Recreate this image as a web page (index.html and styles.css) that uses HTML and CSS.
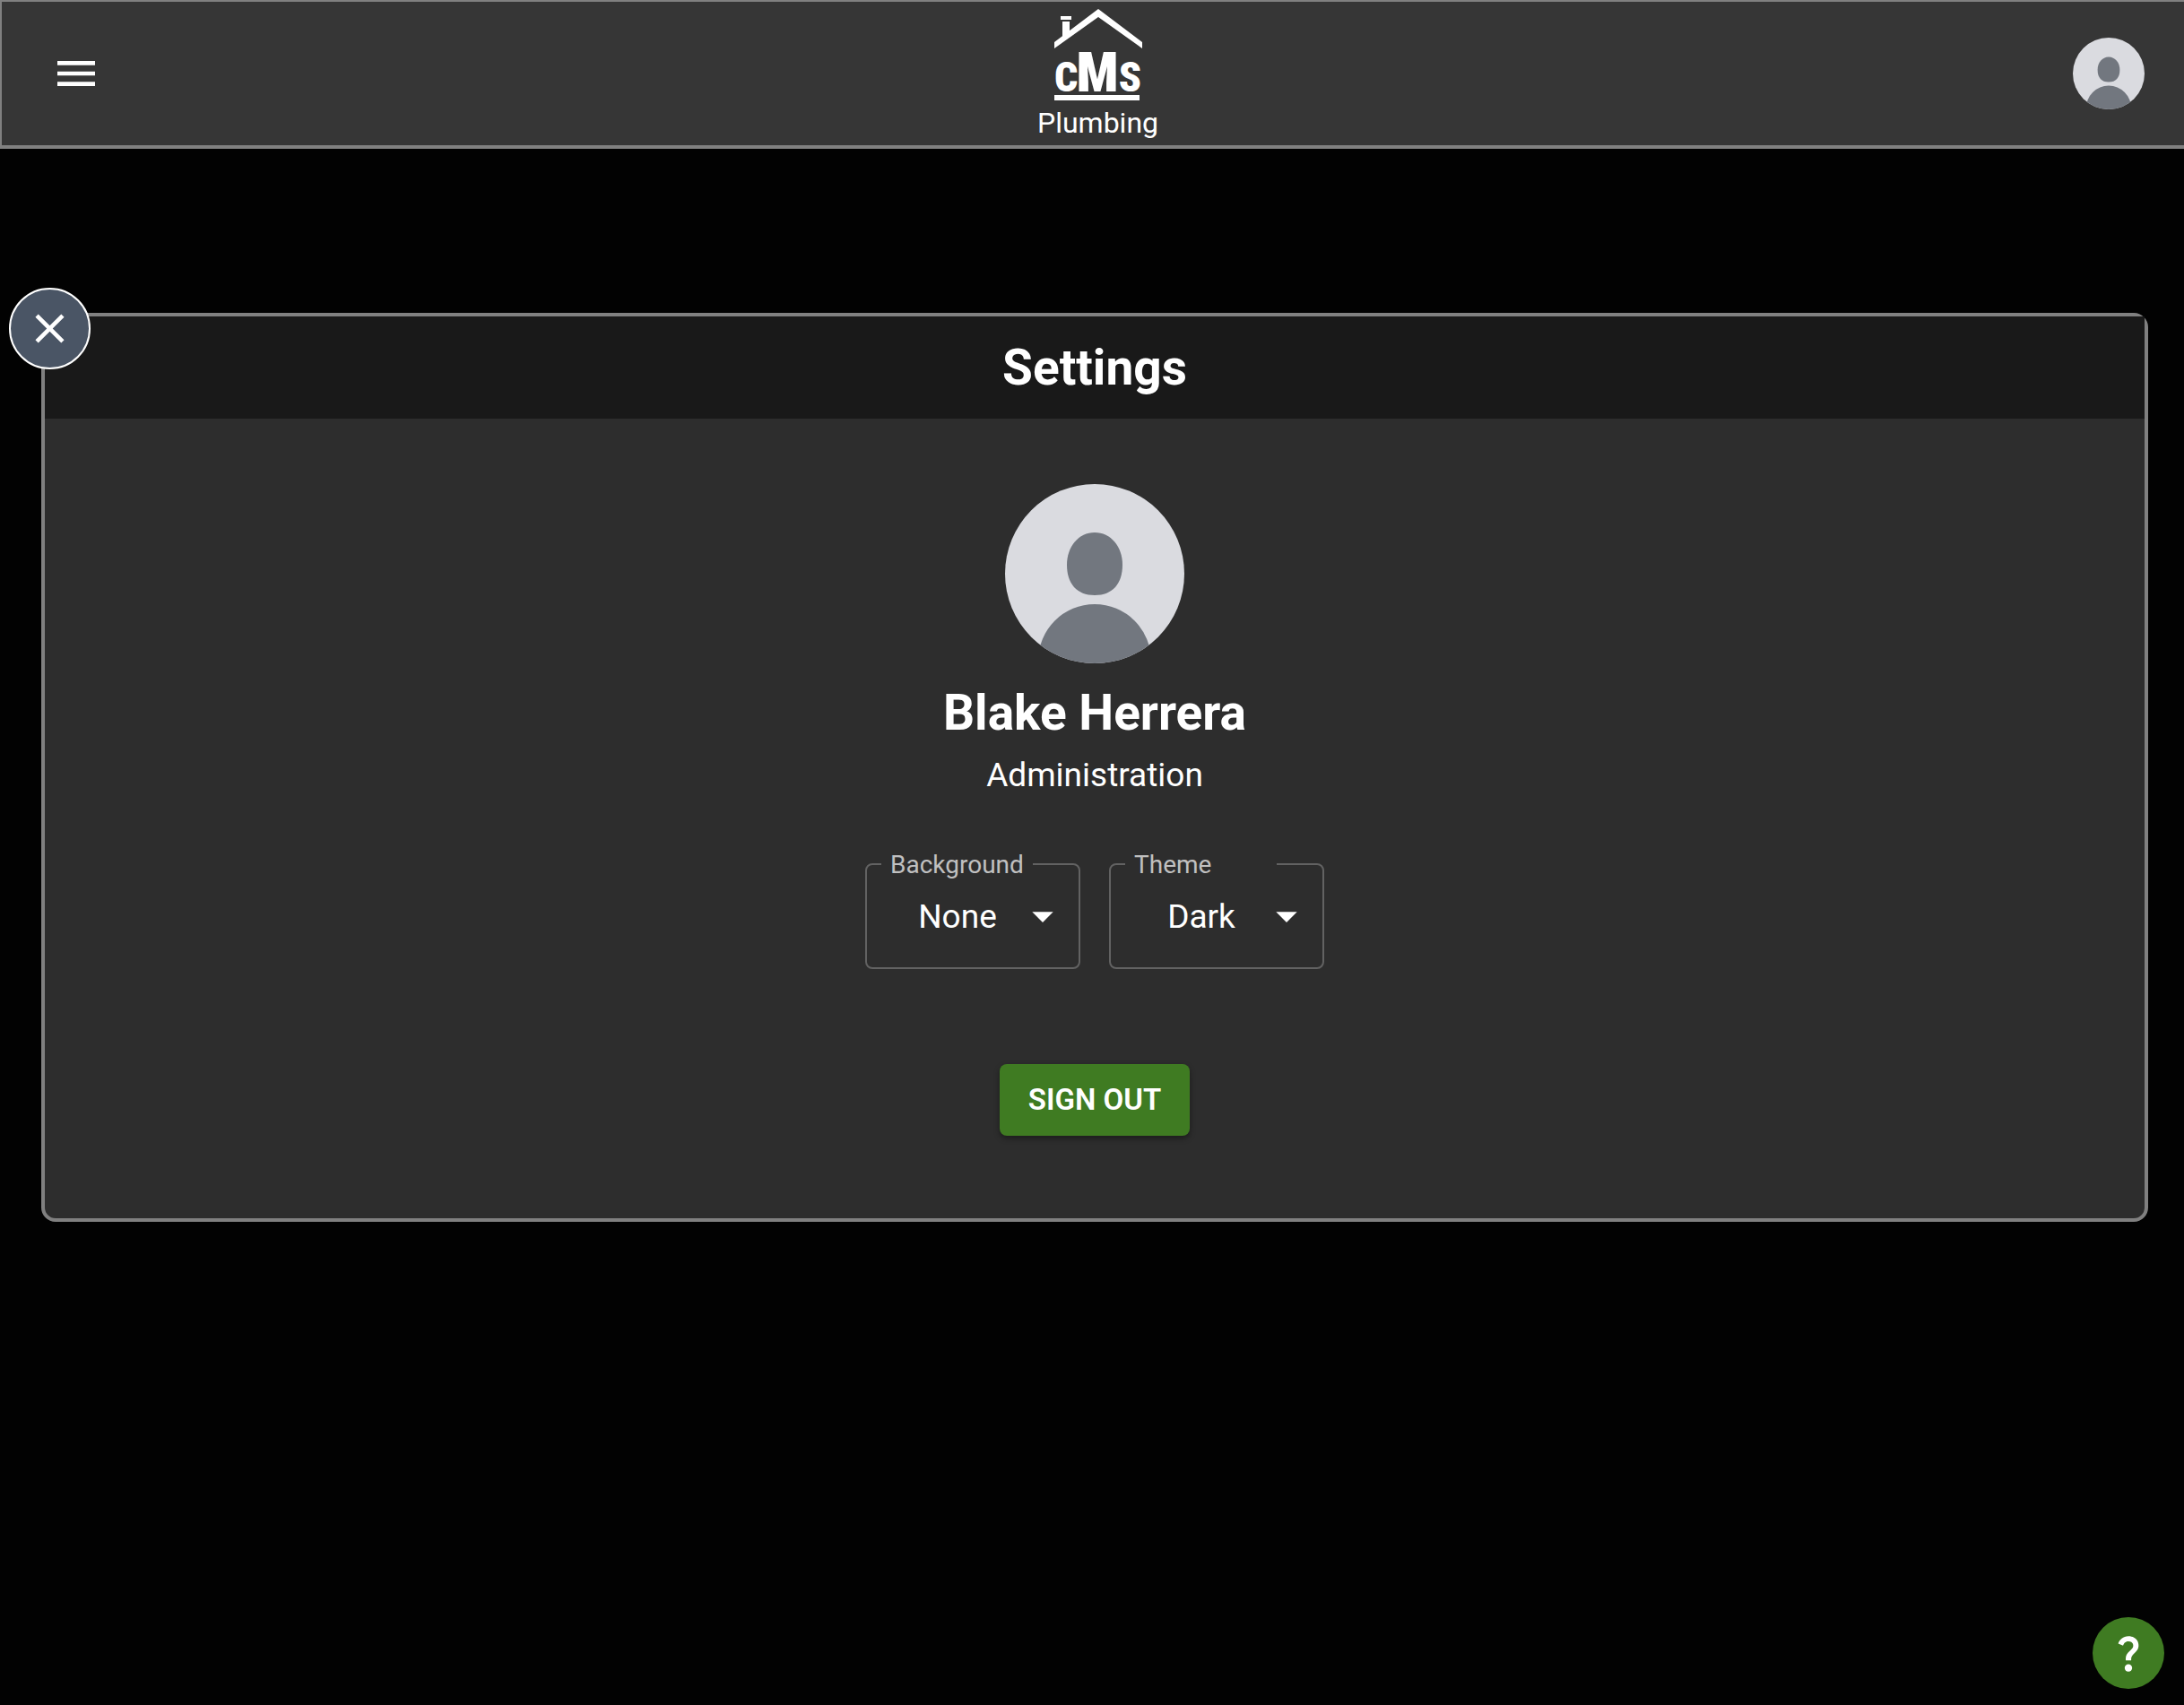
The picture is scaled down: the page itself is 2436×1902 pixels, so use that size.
FILE: index.html
```html
<!DOCTYPE html>
<html lang="en">
<head>
    <meta charset="UTF-8">
    <meta name="viewport" content="width=device-width, initial-scale=1">
    <title>CMS Plumbing - Settings</title>
    <link rel="stylesheet" href="styles.css">
</head>
<body>
    <!-- avatar artwork, shared by the top bar and the profile -->
    <svg class="sprite" aria-hidden="true">
        <symbol id="avatar" viewBox="0 0 200 200">
            <clipPath id="avatar-clip"><circle cx="100" cy="100" r="100"/></clipPath>
            <g clip-path="url(#avatar-clip)">
                <rect width="200" height="200" fill="#dadbe0"/>
                <path d="M100 54c18 0 31 16 31 36 0 21-11 34-31 34s-31-13-31-34c0-20 13-36 31-36z" fill="#72777f"/>
                <circle cx="100" cy="197" r="63" fill="#72777f"/>
            </g>
        </symbol>
    </svg>

    <header class="top-bar">
        <button class="icon-button" aria-label="Menu">
            <svg class="menu-icon" viewBox="0 0 24 24"><path d="M3 18h18v-2H3v2zm0-5h18v-2H3v2zm0-7v2h18V6H3z"/></svg>
        </button>
        <a class="brand" href="#">
            <svg class="logo" viewBox="0 0 98 102">
                <path d="M0 37 49 0l49 37v7L49 9 0 44z"/>
                <path d="M9 14h8v12l-8 6zM7 8h12v4H7z"/>
                <text class="logo-side" x="0" y="92">C</text>
                <text class="logo-main" x="48" y="92">M</text>
                <text class="logo-side logo-end" x="97" y="92">S</text>
                <path d="M0 96h95v6H0z"/>
            </svg>
            <span class="brand-name">Plumbing</span>
        </a>
        <button class="icon-button account" aria-label="Account">
            <svg class="avatar-small"><use href="#avatar"/></svg>
        </button>
    </header>

    <main>
        <section class="card">
            <button class="close-button" aria-label="Close">
                <svg viewBox="0 0 24 24"><path d="M19 6.41 17.59 5 12 10.59 6.41 5 5 6.41 10.59 12 5 17.59 6.41 19 12 13.41 17.59 19 19 17.59 13.41 12z"/></svg>
            </button>
            <h1 class="card-title">Settings</h1>
            <div class="card-body">
                <svg class="avatar-large"><use href="#avatar"/></svg>
                <h2 class="name">Blake Herrera</h2>
                <p class="role">Administration</p>
                <div class="fields">
                    <div class="field">
                        <label for="background">Background</label>
                        <select id="background">
                            <option>None</option>
                        </select>
                        <svg class="arrow" viewBox="0 0 24 24"><path d="m7 10 5 5 5-5z"/></svg>
                    </div>
                    <div class="field">
                        <label for="theme">Theme</label>
                        <select id="theme">
                            <option>Dark</option>
                            <option>Light</option>
                        </select>
                        <svg class="arrow" viewBox="0 0 24 24"><path d="m7 10 5 5 5-5z"/></svg>
                    </div>
                </div>
                <button class="sign-out">SIGN OUT</button>
            </div>
        </section>
    </main>

    <button class="help-button" aria-label="Help">
        <svg viewBox="0 0 24 24"><path d="M11.07 12.85c.77-1.39 2.25-2.21 3.11-3.44.91-1.29.4-3.7-2.18-3.7-1.69 0-2.52 1.28-2.87 2.34L6.54 6.96C7.25 4.83 9.18 3 11.99 3c2.35 0 3.96 1.07 4.78 2.41.7 1.15 1.11 3.3.03 4.9-1.2 1.77-2.35 2.31-2.97 3.45-.25.46-.35.76-.35 2.24h-2.89c-.01-.78-.13-2.05.48-3.15zM14 20c0 1.1-.9 2-2 2s-2-.9-2-2 .9-2 2-2 2 .9 2 2z"/></svg>
    </button>
</body>
</html>
```
FILE: styles.css
```css
* {
    box-sizing: border-box;
}
body {
    margin: 0;
    min-height: 100vh;
    background-color: #020202;
    color: #fff;
    font-family: Roboto, "Liberation Sans", sans-serif;
}
h1, h2, p {
    margin: 0;
    font-size: 55px;
    line-height: 66px;
}
button {
    padding: 0;
    border: none;
    color: #fff;
    font-family: inherit;
    cursor: pointer;
}
svg {
    display: block;
    fill: currentColor;
}
.sprite {
    position: absolute;
    width: 0;
    height: 0;
}

/* Top bar */
.top-bar {
    display: grid;
    grid-template-columns: 1fr auto 1fr;
    align-items: center;
    padding: 8px 44px 8px 55px;
    background-color: #363636;
    border: solid #808080;
    border-width: 2px 0 4px 2px;
}
.icon-button {
    justify-self: start;
    background: none;
}
.account {
    justify-self: end;
}
.menu-icon {
    width: 56px;
    height: 56px;
}
.avatar-small {
    width: 80px;
    height: 80px;
}
.brand {
    display: flex;
    flex-direction: column;
    align-items: center;
    gap: 8px;
    color: #fff;
    text-decoration: none;
}
.logo {
    width: 98px;
    height: 102px;
    overflow: visible;
}
.logo text {
    font-family: "Roboto Condensed", "Liberation Sans Narrow", Roboto, sans-serif;
    font-weight: 900;
}
.logo-side {
    font-size: 46px;
}
.logo-main {
    font-size: 62px;
    text-anchor: middle;
}
.logo-end {
    text-anchor: end;
}
.brand-name {
    font-size: 32px;
    line-height: 34px;
}

/* Settings card */
main {
    padding: 183px 40px 40px 46px;
}
.card {
    position: relative;
    background-color: #2d2d2d;
    border: 4px solid #808080;
    border-radius: 16px;
}
.close-button {
    position: absolute;
    top: -32px;
    left: -40px;
    display: flex;
    align-items: center;
    justify-content: center;
    width: 91px;
    height: 91px;
    background-color: #4a5565;
    border: 2px solid #fff;
    border-radius: 50%;
}
.close-button svg {
    width: 55px;
    height: 55px;
}
.card-title {
    padding: 24px;
    background-color: #191919;
    text-align: center;
}
.card-body {
    display: flex;
    flex-direction: column;
    align-items: center;
    padding: 73px 24px 92px;
}
.avatar-large {
    width: 200px;
    height: 200px;
    margin-bottom: 22px;
}
.name {
    margin-bottom: 16px;
}
.role {
    font-size: 37px;
    line-height: 42px;
    margin-bottom: 77px;
}
.fields {
    display: flex;
    gap: 32px;
    margin-bottom: 106px;
}
.field {
    position: relative;
    width: 240px;
}
.field label {
    position: absolute;
    top: -14px;
    left: 18px;
    min-width: 169px;
    padding: 0 10px;
    background-color: #2d2d2d;
    color: #c0c0c0;
    font-size: 28px;
    line-height: 32px;
}
.field select {
    display: block;
    width: 100%;
    height: 118px;
    padding: 0 62px 0 28px;
    appearance: none;
    background: none;
    border: 2px solid #626262;
    border-radius: 8px;
    color: #fff;
    font-family: inherit;
    font-size: 37px;
    text-align: center;
    text-align-last: center;
}
.arrow {
    position: absolute;
    top: 31px;
    right: 14px;
    width: 56px;
    height: 56px;
    pointer-events: none;
}
.sign-out {
    padding: 20px 32px;
    background-color: #3f7b22;
    border-radius: 8px;
    box-shadow: 0 3px 6px rgba(0, 0, 0, 0.4);
    font-size: 33px;
    font-weight: 600;
    line-height: 40px;
}

/* Floating help button */
.help-button {
    position: fixed;
    right: 22px;
    bottom: 18px;
    display: flex;
    align-items: center;
    justify-content: center;
    width: 80px;
    height: 80px;
    background-color: #3f7b22;
    border-radius: 50%;
}
.help-button svg {
    width: 50px;
    height: 50px;
}
```
